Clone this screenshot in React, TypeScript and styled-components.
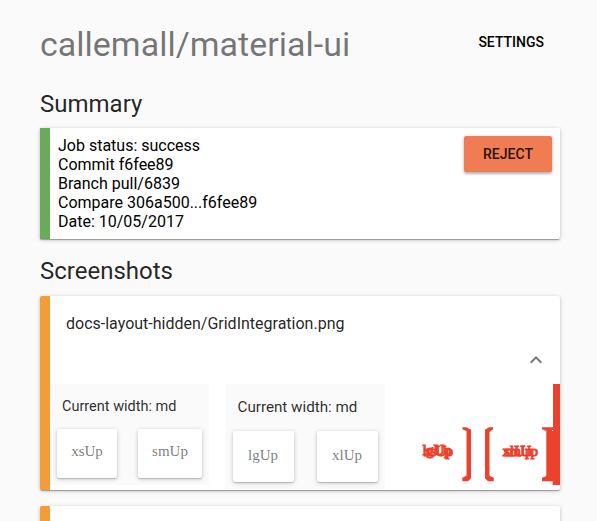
import React from 'react';
import styled, { createGlobalStyle } from 'styled-components';

const GlobalStyle = createGlobalStyle`
  *, *::before, *::after { box-sizing: border-box; }
  body {
    margin: 0;
    background: #fafafa;
    font-family: Roboto, 'Liberation Sans', sans-serif;
    color: #000;
  }
`;

const Page = styled.main`
  height: 521px;
  padding: 24px 37px 0 40px;
  overflow: hidden;
`;

const Header = styled.header`
  display: flex;
  justify-content: space-between;
  align-items: flex-start;
  height: 64px;
`;

const Title = styled.h1`
  margin: 0;
  font-size: 34px;
  font-weight: 400;
  line-height: 40px;
  color: rgba(0, 0, 0, 0.54);
`;

const Button = styled.button<{ $raised?: boolean }>`
  min-width: 88px;
  height: 36px;
  padding: 0 16px;
  border: 0;
  border-radius: 2px;
  font: 500 14px/36px Roboto, sans-serif;
  text-transform: uppercase;
  color: ${(p) => (p.$raised ? 'rgba(0, 0, 0, 0.87)' : '#000')};
  background: ${(p) => (p.$raised ? '#ef7c52' : 'transparent')};
  box-shadow: ${(p) =>
    p.$raised
      ? '0 1px 4px rgba(0, 0, 0, 0.2), 0 2px 2px rgba(0, 0, 0, 0.18)'
      : 'none'};
`;

const Heading = styled.h2`
  margin: 0;
  height: 40px;
  font-size: 24px;
  font-weight: 400;
  line-height: 32px;
  color: rgba(0, 0, 0, 0.87);
`;

const Card = styled.section<{ $accent: string }>`
  border-left: 10px solid ${(p) => p.$accent};
  border-radius: 2px;
  background: #fff;
  overflow: hidden;
  box-shadow: 0 1px 4px rgba(0, 0, 0, 0.22), 0 1px 1px rgba(0, 0, 0, 0.18),
    0 2px 1px -1px rgba(0, 0, 0, 0.14);
`;

const SummaryCard = styled(Card)`
  display: flex;
  justify-content: space-between;
  align-items: flex-start;
  height: 111px;
  padding: 8px;
  border-radius: 0 2px 2px 0;
`;

const Shots = styled.div`
  display: flex;
  flex-direction: column;
  gap: 16px;
  padding-top: 16px;
`;

const ShotsHeading = styled(Heading)`
  height: 25px;
`;

const Details = styled.div`
  font-size: 16px;
  line-height: 19px;
`;

const ShotCard = styled(Card)`
  display: flex;
  flex-direction: column;
  height: 194px;
`;

const ShotName = styled.div`
  padding: 16px 16px 0;
  height: 52px;
  font-size: 16px;
  line-height: 24px;
  color: rgba(0, 0, 0, 0.87);
`;

const Actions = styled.div`
  display: flex;
  justify-content: flex-end;
  align-items: flex-start;
  height: 36px;
  padding-right: 12px;
`;

const Gallery = styled.div`
  display: grid;
  grid-template-columns: 159px 160px 160px;
  column-gap: 15.5px;
  align-items: start;
  height: 106px;
`;

const Shot = styled.div<{ $large?: boolean }>`
  height: ${(p) => (p.$large ? 106 : 101)}px;
  padding: ${(p) => (p.$large ? '14px 7px 0 8px' : '13px 7px 0 7px')};
  background: #fafafa;
`;

const ShotLabel = styled.div<{ $large?: boolean }>`
  height: ${(p) => (p.$large ? 33 : 32)}px;
  padding-left: 5px;
  font-size: ${(p) => (p.$large ? 15.2 : 14.5)}px;
  line-height: 19px;
  white-space: nowrap;
  color: rgba(0, 0, 0, 0.84);
`;

const Tiles = styled.div<{ $large?: boolean }>`
  display: flex;
  justify-content: space-between;
  height: ${(p) => (p.$large ? 51 : 49)}px;
`;

const Tile = styled.div<{ $w: number; $large?: boolean }>`
  display: flex;
  align-items: center;
  justify-content: center;
  width: ${(p) => p.$w}px;
  padding-bottom: ${(p) => (p.$large ? 3 : 5)}px;
  border-radius: 2px;
  background: #fff;
  font: 15px 'Liberation Serif', serif;
  color: rgba(0, 0, 0, 0.54);
  box-shadow: 0 1px 4px rgba(0, 0, 0, 0.22), 0 1px 1px rgba(0, 0, 0, 0.16);
`;

const DiffDrawing = styled.svg`
  display: block;
  width: 160px;
  height: 101px;
  fill: #ec412c;
  font: 15px 'Liberation Serif', serif;

  text {
    stroke: #ec412c;
    stroke-width: 1px;
  }
`;

const Diff = () => (
  <DiffDrawing viewBox="0 0 160 101">
    <text x="22.5" y="71" textLength="29">lgUp</text>
    <text x="24" y="72" textLength="29">xsUp</text>
    <text x="104" y="71.5" textLength="34">smUp</text>
    <text x="102.5" y="72" textLength="30">xlUp</text>
    <path d="M62.3 43.3h4l4.7 2.4v48.5l-3 3h-5.7v-3.4l4.2-2V47l-4.2-1.7z" />
    <path d="M93 43.3h-4l-4 2.4v48.5l3 3h5.8v-3.4l-4.3-2V48l3.5-2.7z" />
    <path d="M142 43.3h11V0h7v101h-7.3v-3.8H142v-3.4l4.3-1.8V47l-4.3-1.7z" />
    <rect x="152" y="46" width="1" height="1" fill="#fff" />
  </DiffDrawing>
);

const ORANGE = '#f39d39';

export default function App() {
  return (
    <>
      <GlobalStyle />
      <Page>
        <Header>
          <Title>callemall/material-ui</Title>
          <Button>Settings</Button>
        </Header>

        <Heading>Summary</Heading>
        <SummaryCard $accent="#68ab5b">
          <Details>
            <div>Job status: success</div>
            <div>Commit f6fee89</div>
            <div>Branch pull/6839</div>
            <div>Compare 306a500...f6fee89</div>
            <div>Date: 10/05/2017</div>
          </Details>
          <Button $raised>Reject</Button>
        </SummaryCard>

        <Shots>
          <ShotsHeading>Screenshots</ShotsHeading>
          <ShotCard $accent={ORANGE}>
            <ShotName>docs-layout-hidden/GridIntegration.png</ShotName>
            <Actions>
              <svg width="24" height="24" viewBox="0 0 24 24" fill="#757575">
                <path d="M12 8l-6 6 1.41 1.41L12 10.83l4.59 4.58L18 14z" />
              </svg>
            </Actions>
            <Gallery>
              <Shot>
                <ShotLabel>Current width: md</ShotLabel>
                <Tiles>
                  <Tile $w={60}>xsUp</Tile>
                  <Tile $w={64}>smUp</Tile>
                </Tiles>
              </Shot>
              <Shot $large>
                <ShotLabel $large>Current width: md</ShotLabel>
                <Tiles $large>
                  <Tile $w={61} $large>lgUp</Tile>
                  <Tile $w={61} $large>xlUp</Tile>
                </Tiles>
              </Shot>
              <Diff />
            </Gallery>
          </ShotCard>
          <ShotCard $accent={ORANGE} />
        </Shots>
      </Page>
    </>
  );
}
